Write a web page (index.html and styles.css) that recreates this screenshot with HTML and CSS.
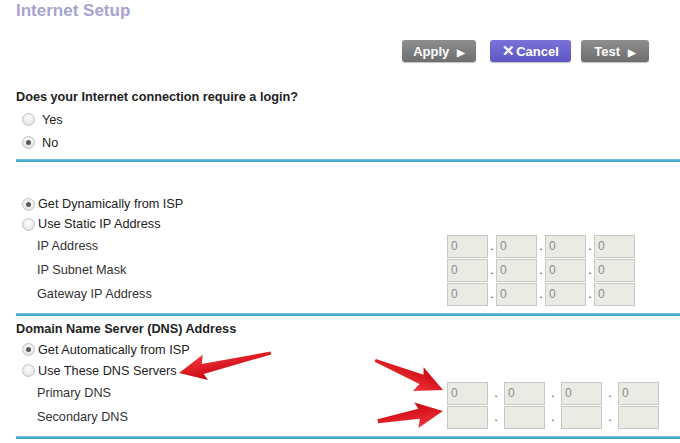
FILE: index.html
```html
<!DOCTYPE html>
<html lang="en">
<head>
    <meta charset="UTF-8">
    <title>Internet Setup</title>
    <link rel="stylesheet" href="styles.css">
</head>
<body>
    <div class="page">
        <h1>Internet Setup</h1>

        <div class="actions">
            <button class="btn grey">Apply <span class="tri">&#9654;</span></button>
            <button class="btn purple"><span class="x">&#10005;</span>Cancel</button>
            <button class="btn grey test">Test <span class="tri">&#9654;</span></button>
        </div>

        <!-- login -->
        <div class="section login">
            <div class="row title">Does your Internet connection require a login?</div>
            <div class="row opt"><span class="radio"></span>Yes</div>
            <div class="row opt"><span class="radio on"></span>No</div>
        </div>
        <div class="rule"></div>

        <!-- ip address -->
        <div class="section ip">
            <div class="row opt"><span class="radio on"></span>Get Dynamically from ISP</div>
            <div class="row opt"><span class="radio"></span>Use Static IP Address</div>
            <div class="field">
                <span class="label">IP Address</span>
                <span class="ipbox"><input value="0" readonly><i>.</i><input value="0" readonly><i>.</i><input value="0" readonly><i>.</i><input value="0" readonly></span>
            </div>
            <div class="field">
                <span class="label">IP Subnet Mask</span>
                <span class="ipbox"><input value="0" readonly><i>.</i><input value="0" readonly><i>.</i><input value="0" readonly><i>.</i><input value="0" readonly></span>
            </div>
            <div class="field">
                <span class="label">Gateway IP Address</span>
                <span class="ipbox"><input value="0" readonly><i>.</i><input value="0" readonly><i>.</i><input value="0" readonly><i>.</i><input value="0" readonly></span>
            </div>
        </div>
        <div class="rule low"></div>

        <!-- dns -->
        <div class="section dns">
            <div class="row title">Domain Name Server (DNS) Address</div>
            <div class="row opt"><span class="radio on"></span>Get Automatically from ISP</div>
            <div class="row opt"><span class="radio"></span>Use These DNS Servers</div>
            <div class="field">
                <span class="label">Primary DNS</span>
                <span class="ipbox wide"><input value="0" readonly><i>.</i><input value="0" readonly><i>.</i><input value="0" readonly><i>.</i><input value="0" readonly></span>
            </div>
            <div class="field">
                <span class="label">Secondary DNS</span>
                <span class="ipbox wide"><input readonly><i>.</i><input readonly><i>.</i><input readonly><i>.</i><input readonly></span>
            </div>
        </div>
        <div class="rule low"></div>
    </div>

    <!-- red arrows drawn over the screenshot -->
    <svg class="arrows" width="680" height="443" viewBox="0 0 680 443">
        <defs>
            <linearGradient id="red" x1="0" y1="0" x2="0" y2="1">
                <stop offset="0" stop-color="#f2343a"/>
                <stop offset="1" stop-color="#c8070d"/>
            </linearGradient>
        </defs>
        <g transform="translate(179 373) rotate(-12)">
            <polygon points="0,0 27,-13 24,-4 94,-2 94,1 24,6 27,13" fill="url(#red)"/>
        </g>
        <g transform="translate(443 390) rotate(-156)">
            <polygon points="0,0 27,-13 24,-4 74,-2 74,1 24,6 27,13" fill="url(#red)"/>
        </g>
        <g transform="translate(443 411) rotate(171)">
            <polygon points="0,0 27,-13 24,-4 66,-2 66,2 24,6 27,13" fill="url(#red)"/>
        </g>
    </svg>
</body>
</html>
```

FILE: styles.css
```css
body {
    margin: 0;
    font-family: "Liberation Sans", Arial, sans-serif;
    font-size: 12.7px;
    color: #222;
    background: #fff;
}
.page {
    padding-left: 16px;
}
h1 {
    margin: 0;
    padding-top: 1px;
    font-size: 17px;
    line-height: 20px;
    color: #a7a3cf;
}
.actions {
    display: flex;
    justify-content: flex-end;
    padding-right: 31px;
    margin-top: 19px;
}
.btn {
    height: 22px;
    border: none;
    border-radius: 3px;
    color: #fff;
    font-family: "Liberation Sans", Arial, sans-serif;
    font-weight: bold;
    font-size: 13px;
    padding: 0;
    box-shadow: 0 1px 1px rgba(0,0,0,0.25);
}
.grey {
    background: linear-gradient(#8e8e8e, #6e6e6e);
    width: 74px;
    margin-left: 10px;
}
.purple {
    background: linear-gradient(#7a72d8, #5f56c4);
    width: 81px;
    margin-left: 14px;
}
.test {
    width: 68px;
}
.tri {
    font-size: 10px;
    margin-left: 4px;
}
.x {
    font-size: 15px;
    margin-right: 1px;
}
.section {
    display: flex;
    flex-direction: column;
}
.row {
    display: flex;
    align-items: center;
    height: 22px;
}
.title {
    font-weight: bold;
}
.opt {
    padding-left: 6px;
}
.radio {
    width: 11px;
    height: 11px;
    border: 1px solid #c4c4c4;
    border-radius: 50%;
    background: radial-gradient(circle at 50% 35%, #fff, #dcdcdc);
    margin-right: 3px;
    position: relative;
}
.radio.on::after {
    content: "";
    position: absolute;
    left: 3px;
    top: 3px;
    width: 5px;
    height: 5px;
    border-radius: 50%;
    background: #5a5a5a;
}
.login {
    margin-top: 24px;
}
.login .opt {
    height: 23px;
}
.login .radio {
    margin-right: 7px;
}
.ip {
    margin-top: 32px;
}
.ip .opt {
    height: 20px;
}
.dns {
    margin-top: 3px;
}
.dns .title {
    height: 20px;
}
.dns .opt {
    height: 21px;
}
.field {
    display: flex;
    align-items: center;
    height: 24px;
    padding-left: 21px;
}
.label {
    width: 410px;
    color: #333;
}
.ipbox {
    display: flex;
    align-items: center;
}
.ipbox input {
    width: 41px;
    height: 23px;
    box-sizing: border-box;
    border: 1px solid #c9c9c4;
    background: #ebebe6;
    color: #8a8a8a;
    font-family: "Liberation Sans", Arial, sans-serif;
    font-size: 12px;
    padding: 0 0 0 3px;
    margin: 0;
}
.ipbox i {
    width: 8px;
    text-align: center;
    font-style: normal;
    color: #444;
}
.ipbox.wide i {
    width: 16px;
}
.rule {
    height: 3px;
    background: linear-gradient(#7cc6df, #2b9cc4);
    margin-top: 5px;
}
.rule.low {
    margin-top: 7px;
}
.arrows {
    position: absolute;
    left: 0;
    top: 0;
    pointer-events: none;
}
```
